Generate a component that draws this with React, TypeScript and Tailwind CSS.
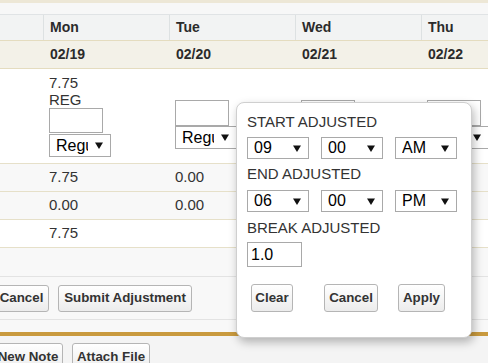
import clsx from "clsx";

const font = { fontFamily: '"Liberation Sans", Arial, sans-serif' };

function Caret() {
  return (
    <svg width="8" height="7" viewBox="0 0 8 7" className="ml-auto mr-[7px] shrink-0">
      <path d="M0 0.5 H8 L4 7 Z" fill="#111" />
    </svg>
  );
}

function Sel({ value, className }: { value: string; className?: string }) {
  return (
    <div
      className={clsx(
        "flex w-[62px] items-center border border-[#a9a9a9] bg-white pl-[6px] text-[16px] leading-none text-black",
        className
      )}
    >
      <span className="w-[32px] overflow-hidden whitespace-nowrap">{value}</span>
      <Caret />
    </div>
  );
}

function Btn({ label, className }: { label: string; className?: string }) {
  return (
    <button
      className={clsx(
        "flex items-center justify-center rounded-[3px] border border-[#b5b5b5] bg-gradient-to-b from-white to-[#ececec] text-[13.33px] font-bold text-[#333]",
        className
      )}
    >
      {label}
    </button>
  );
}

const days = [
  { day: "Mon", date: "02/19" },
  { day: "Tue", date: "02/20" },
  { day: "Wed", date: "02/21" },
  { day: "Thu", date: "02/22" },
];

// wed/thu cells sit under the popup, so they are left blank
const rows = [
  { vals: ["7.75", "0.00", "", ""], bg: "bg-[#f8f8f8]" },
  { vals: ["0.00", "0.00", "", ""], bg: "bg-[#f8f8f8]" },
  { vals: ["7.75", "", "", ""], bg: "bg-white" },
];

export default function App() {
  return (
    <div
      className="relative h-[363px] w-[488px] overflow-hidden bg-[#f7f7f7] text-[#333]"
      style={font}
    >
      <div className="h-[3px] bg-[#ede7d6]" />
      <div className="h-[11px] bg-[#f7f7f7]" />

      {/* day header */}
      <div className="flex h-[27px] border-t border-b border-t-[#e0e3e5] border-b-[#e4dcbf] bg-[#f2f3f3]">
        <div className="w-[43px] shrink-0" />
        {days.map((d) => (
          <div
            key={d.day}
            className="flex w-[126px] shrink-0 items-center border-l border-[#dde1e2] pl-[6px] text-[14px] font-bold text-[#2b2b2b]"
          >
            {d.day}
          </div>
        ))}
      </div>

      {/* dates */}
      <div className="flex h-[28px] border-b border-[#e4dcbf] bg-[#f3f1e8]">
        <div className="w-[43px] shrink-0" />
        {days.map((d) => (
          <div
            key={d.date}
            className="flex w-[126px] shrink-0 items-center pl-[7px] text-[14px] font-bold text-[#2b2b2b]"
          >
            {d.date}
          </div>
        ))}
      </div>

      {/* entry row */}
      <div className="flex h-[95px] border-b border-[#e6e0c9] bg-white">
        <div className="w-[43px] shrink-0" />
        <div className="w-[126px] shrink-0 pl-[6px] pt-[5px] text-[15px] leading-[17px]">
          <div>7.75</div>
          <div>REG</div>
          <div className="h-[25px] w-[54px] border border-[#a9a9a9] bg-white" />
          <Sel value="Regular" className="mt-[1px] h-[23px]" />
        </div>
        {["Regular", "", ""].map((v, i) => (
          <div key={i} className="w-[126px] shrink-0 pl-[6px] pt-[31px]">
            <div className="h-[26px] w-[54px] border border-[#a9a9a9] bg-white" />
            <Sel value={v} className="h-[23px]" />
          </div>
        ))}
      </div>

      {/* totals */}
      {rows.map((r, ri) => (
        <div key={ri} className={clsx("flex h-[28px] border-b border-[#e6e0c9]", r.bg)}>
          <div className="w-[43px] shrink-0" />
          {r.vals.map((v, vi) => (
            <div key={vi} className="flex w-[126px] shrink-0 items-center pl-[6px] text-[15px]">
              {v}
            </div>
          ))}
        </div>
      ))}

      <div className="h-[29px] border-b border-[#e3e3e3] bg-[#f8f8f8]" />

      <div className="flex h-[43px] items-center gap-[9px] border-b border-[#e3e3e3] bg-[#f8f8f8]">
        <Btn label="Cancel" className="-ml-[6px] h-[27px] w-[55px]" />
        <Btn label="Submit Adjustment" className="h-[27px] w-[134px]" />
      </div>

      <div className="h-[12px] bg-[#f8f8f8]" />
      <div className="h-[4px] bg-[#c99a3e]" />

      <div className="flex gap-[9px] bg-[#f4f4f4] pt-[7px]">
        <Btn label="New Note" className="-ml-[7px] h-[27px] w-[70px]" />
        <Btn label="Attach File" className="h-[27px] w-[78px]" />
      </div>

      {/* adjust popup */}
      <div className="absolute left-[236px] top-[102px] flex h-[236px] w-[236px] flex-col rounded-[8px] border border-[#cfcfcf] bg-white pl-[10px] pt-[10px] shadow-[2px_4px_10px_rgba(0,0,0,0.28)]">
        <div className="text-[15px] leading-[17px] text-[#333]">START ADJUSTED</div>
        <div className="mt-[7px] flex gap-[12px]">
          <Sel value="09" className="h-[22px]" />
          <Sel value="00" className="h-[22px]" />
          <Sel value="AM" className="h-[22px]" />
        </div>
        <div className="mt-[6px] text-[15px] leading-[17px] text-[#333]">END ADJUSTED</div>
        <div className="mt-[8px] flex gap-[12px]">
          <Sel value="06" className="h-[22px]" />
          <Sel value="00" className="h-[22px]" />
          <Sel value="PM" className="h-[22px]" />
        </div>
        <div className="mt-[7px] text-[15px] leading-[17px] text-[#333]">BREAK ADJUSTED</div>
        <div className="mt-[6px] flex h-[25px] w-[55px] items-center border border-[#a9a9a9] pl-[3px] text-[16px] text-black">
          1.0
        </div>
        <div className="mt-[17px] flex">
          <Btn label="Clear" className="ml-[4px] h-[28px] w-[42px]" />
          <Btn label="Cancel" className="ml-[31px] h-[28px] w-[54px]" />
          <Btn label="Apply" className="ml-[20px] h-[28px] w-[47px]" />
        </div>
      </div>
    </div>
  );
}
